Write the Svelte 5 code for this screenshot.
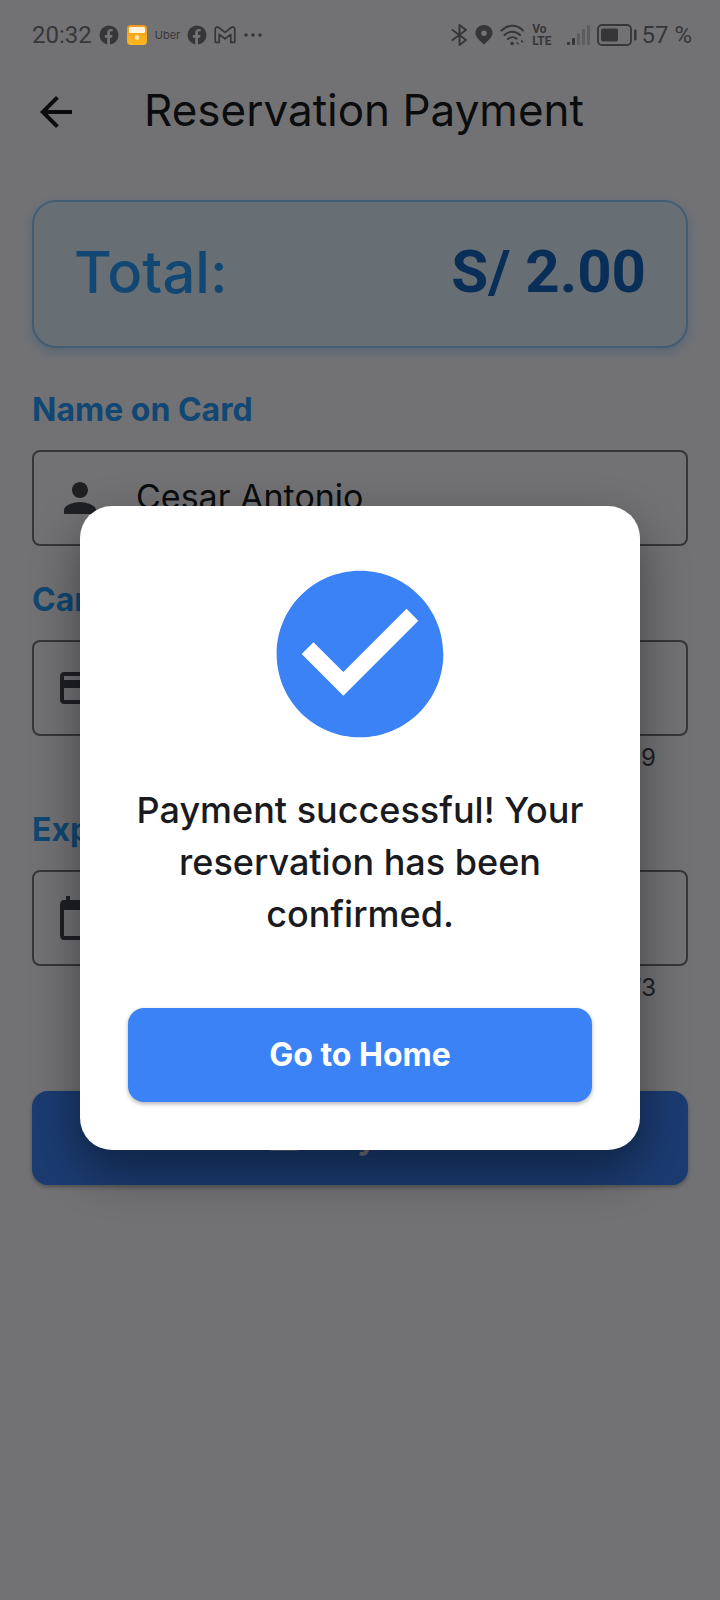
<script>
  let name = $state('Cesar Antonio');
  let cardNumber = $state('4557 8800 1234 5678');
  let expiry = $state('12/28');
  let cvv = $state('123');
  const bars = [3, 7, 12, 16, 20];
</script>

{#snippet facebook()}
  <svg class="glyph" width="20" height="20" viewBox="0 0 20 20" aria-hidden="true">
    <circle cx="10" cy="10" r="9.5" fill="currentColor" />
    <path d="M8.2 20v-7.2H5.8V10h2.4V7.9c0-2.6 1.5-3.9 3.7-3.9.9 0 1.8.1 1.8.1v2.2h-1.1c-1.2 0-1.6.7-1.6 1.5V10h2.6l-.5 2.8H11V20z" fill="#737375" />
  </svg>
{/snippet}

{#snippet card()}
  <path d="M20 4H4c-1.11 0-1.99.89-1.99 2L2 18c0 1.11.89 2 2 2h16c1.11 0 2-.89 2-2V6c0-1.11-.89-2-2-2zm0 14H4v-6h16v6zm0-10H4V6h16v2z" fill="currentColor" />
{/snippet}

<div class="screen">
  <div class="status">
    <div class="group left">
      <span class="clock">20:32</span>
      {@render facebook()}
      <svg class="glyph" width="22" height="22" viewBox="0 0 22 22" aria-hidden="true">
        <defs>
          <linearGradient id="amber" x1="0" y1="0" x2="0" y2="1">
            <stop offset="0" stop-color="#ee9a22" />
            <stop offset="1" stop-color="#ffb81c" />
          </linearGradient>
        </defs>
        <rect x="1" y="1" width="20" height="20" rx="4" fill="url(#amber)" />
        <rect x="3" y="3" width="16" height="6" rx="1.5" fill="#fff3dc" />
        <circle cx="11" cy="13.5" r="2.2" fill="#ffedc0" />
      </svg>
      <span class="uber">Uber</span>
      {@render facebook()}
      <svg class="glyph" width="22" height="18" viewBox="0 0 22 18" fill="none" stroke="currentColor" stroke-width="1.7" stroke-linejoin="round" aria-hidden="true">
        <path d="M1.2 3.2v12.2q0 1 1 1h3V8.400L11 12.800l5.800-4.400v8h3q1 0 1-1V3.200c0-2-2-2.800-3.400-1.700L11 6.400 4.600 1.500C3.200.4 1.200 1.200 1.200 3.200z" />
      </svg>
      <svg class="glyph" width="20" height="20" viewBox="0 0 20 20" fill="currentColor" aria-hidden="true">
        <circle cx="3" cy="10" r="1.800" /><circle cx="10" cy="10" r="1.800" /><circle cx="17" cy="10" r="1.800" />
      </svg>
    </div>
    <div class="group right">
      <svg class="glyph" width="17" height="24" viewBox="0 0 17 24" fill="none" stroke="currentColor" stroke-width="2" stroke-linejoin="round" stroke-linecap="round" aria-hidden="true">
        <path d="M1.500 7l13.500 10L8.500 22V2L15 7 1.500 17" />
      </svg>
      <svg class="glyph" width="18" height="22" viewBox="0 0 18 22" aria-hidden="true">
        <path d="M9 1C4.500 1 .5 4.500.5 9c0 4 3.500 7 8.500 11.500C14 16 17.500 13 17.500 9 17.500 4.500 13.500 1 9 1zm0 5.400a2.800 2.800 0 110 5.600 2.800 2.800 0 010-5.600z" fill="currentColor" />
      </svg>
      <svg class="glyph" width="25" height="22" viewBox="0 0 25 22" fill="none" stroke="currentColor" stroke-width="2" stroke-linecap="round" aria-hidden="true">
        <path d="M1.500 6.500C7.500.3 17 .3 23 6.500M4.500 11C9 6.700 15.500 6.700 20 11M8 15c2.500-2.300 6-2.300 8.500-.2" />
        <circle cx="12" cy="19.500" r="1.800" fill="currentColor" stroke="none" />
        <path d="M18.600 15v6l-3-2.600h3zM21 21.500v-6l3.200 2.700H21z" fill="currentColor" stroke="none" />
      </svg>
      <span class="volte"><span>Vo</span><span>LTE</span></span>
      <svg class="glyph signal" width="24" height="22" viewBox="0 0 24 22" aria-hidden="true">
        {#each bars as h, i}
          <rect x={1 + i * 5} y={21 - h} width="3" height={h} rx="1" fill="currentColor" opacity={i < 2 ? 1 : 0.35} />
        {/each}
      </svg>
      <svg class="glyph" width="41" height="22" viewBox="0 0 41 22" aria-hidden="true">
        <rect x="1" y="1" width="33" height="20" rx="4" fill="none" stroke="currentColor" stroke-width="1.800" />
        <rect x="4" y="4.500" width="17" height="13" rx="2" fill="currentColor" />
        <rect x="37" y="5.500" width="2.500" height="11" rx="1" fill="currentColor" />
      </svg>
      <span class="clock">57 %</span>
    </div>
  </div>

  <header>
    <button class="back" aria-label="Back">
      <svg width="48" height="48" viewBox="0 0 24 24" aria-hidden="true">
        <path d="M20 11H7.830l5.590-5.590L12 4l-8 8 8 8 1.410-1.410L7.830 13H20v-2z" fill="currentColor" />
      </svg>
    </button>
    <h1>Reservation Payment</h1>
  </header>

  <main>
    <section class="total">
      <span class="caption">Total:</span>
      <strong>S/ 2.00</strong>
    </section>

    <div class="item">
      <label for="holder">Name on Card</label>
      <div class="field">
        <svg width="48" height="48" viewBox="0 0 24 24" aria-hidden="true">
          <path d="M12 12c2.210 0 4-1.790 4-4s-1.790-4-4-4-4 1.790-4 4 1.790 4 4 4zm0 2c-2.670 0-8 1.340-8 4v2h16v-2c0-2.660-5.330-4-8-4z" fill="currentColor" />
        </svg>
        <input id="holder" bind:value={name} />
      </div>
    </div>

    <div class="item">
      <label for="number">Card Number</label>
      <div class="field">
        <svg width="48" height="48" viewBox="0 0 24 24" aria-hidden="true">{@render card()}</svg>
        <input id="number" maxlength="19" bind:value={cardNumber} />
      </div>
      <span class="counter">{cardNumber.length}/19</span>
    </div>

    <div class="pair">
      <div class="item">
        <label for="expiry">Expiry</label>
        <div class="field">
          <svg width="48" height="48" viewBox="0 0 24 24" aria-hidden="true">
            <path d="M20 3h-1V1h-2v2H7V1H5v2H4c-1.100 0-2 .9-2 2v16c0 1.100.9 2 2 2h16c1.100 0 2-.9 2-2V5c0-1.100-.9-2-2-2zm0 18H4V8h16v13z" fill="currentColor" />
          </svg>
          <input id="expiry" maxlength="5" bind:value={expiry} />
        </div>
        <span class="counter">{expiry.length}/5</span>
      </div>
      <div class="item">
        <label for="cvv">CVV</label>
        <div class="field">
          <input id="cvv" maxlength="3" bind:value={cvv} />
        </div>
        <span class="counter">{cvv.length}/3</span>
      </div>
    </div>

    <button class="primary pay">
      <svg width="38" height="38" viewBox="0 0 24 24" aria-hidden="true">{@render card()}</svg>
      Pay Now
    </button>
  </main>

  <div class="scrim">
    <div class="dialog" role="dialog" aria-modal="true" aria-labelledby="message">
      <svg class="check" width="200" height="200" viewBox="0 0 24 24" aria-hidden="true">
        <path d="M12 2C6.480 2 2 6.480 2 12s4.480 10 10 10 10-4.480 10-10S17.520 2 12 2zm-2 15l-5-5 1.410-1.410L10 14.170l7.590-7.590L19 8l-9 9z" fill="#3b82f6" />
      </svg>
      <p id="message">Payment successful! Your reservation has been confirmed.</p>
      <button class="primary">Go to Home</button>
    </div>
  </div>
</div>

<style>
  :global(body) {
    background: #f9f9ff;
  }
  .screen {
    position: relative;
    min-height: 100vh;
    background: #f9f9ff;
    color: #1a1b20;
    font-family: Inter, 'Open Sans', sans-serif;
  }
  svg {
    display: block;
    flex: none;
  }
  button {
    border: 0;
    font-family: inherit;
    cursor: pointer;
  }
  .status {
    position: relative;
    z-index: 2;
    box-sizing: border-box;
    height: 56px;
    padding: 14px 28px 0 32px;
    display: flex;
    align-items: center;
    justify-content: space-between;
    color: #363638;
  }
  .group {
    display: flex;
    align-items: center;
    gap: 7px;
  }
  .clock {
    font-family: Roboto, sans-serif;
    font-size: 24px;
    line-height: 28px;
    white-space: nowrap;
  }
  .right .clock {
    margin-left: -4px;
  }
  .uber {
    font-size: 11px;
    line-height: 16px;
  }
  .volte {
    display: flex;
    flex-direction: column;
    font-family: Roboto, sans-serif;
    font-size: 12px;
    line-height: 12px;
    font-weight: 700;
  }
  .signal {
    margin-left: 8px;
  }
  header {
    height: 112px;
    padding: 0 32px;
    display: flex;
    align-items: center;
    gap: 64px;
  }
  .back {
    padding: 0;
    background: none;
    color: #1a1b20;
  }
  h1 {
    margin: 0;
    font-size: 44px;
    line-height: 56px;
    font-weight: 400;
    white-space: nowrap;
    padding-bottom: 4px;
  }
  main {
    padding: 32px;
    display: flex;
    flex-direction: column;
  }
  .total {
    box-sizing: border-box;
    height: 148px;
    margin-bottom: 8px;
    padding: 0 40px 4px;
    display: flex;
    align-items: center;
    justify-content: space-between;
    border: 2px solid #90caf9;
    border-radius: 24px;
    background: #e3f2fd;
    box-shadow: 0 4px 12px rgba(33, 150, 243, 0.3);
    font-size: 58px;
    line-height: 72px;
    color: #279cf8;
  }
  .caption {
    font-weight: 500;
  }
  .total strong {
    font-family: Roboto, sans-serif;
    font-size: 60px;
    font-weight: 700;
    color: #1565c0;
  }
  .item {
    flex: 1;
    min-width: 0;
    padding-top: 34px;
    display: flex;
    flex-direction: column;
  }
  label {
    margin-bottom: 20px;
    font-size: 32px;
    line-height: 40px;
    font-weight: 700;
    color: #279cf8;
  }
  .field {
    box-sizing: border-box;
    height: 96px;
    padding: 0 22px;
    display: flex;
    align-items: center;
    gap: 32px;
    border: 2px solid #74757e;
    border-radius: 8px;
    color: #44464f;
  }
  .field input {
    flex: 1;
    min-width: 0;
    height: 48px;
    padding: 0 0 4px;
    border: 0;
    outline: 0;
    background: none;
    font-family: inherit;
    font-size: 34px;
    color: #1a1b20;
  }
  .counter {
    margin: 8px 32px 4px;
    font-size: 24px;
    line-height: 28px;
    text-align: right;
    color: #44464f;
  }
  .pair {
    display: flex;
    gap: 32px;
  }
  .primary {
    height: 94px;
    width: 100%;
    display: flex;
    align-items: center;
    justify-content: center;
    gap: 16px;
    border-radius: 16px;
    background: #3b82f6;
    box-shadow: 0 2px 4px rgba(0, 0, 0, 0.3);
    font-size: 32px;
    line-height: 40px;
    font-weight: 700;
    color: #fff;
  }
  .pay {
    margin-top: 85px;
  }
  .scrim {
    position: absolute;
    inset: 0;
    z-index: 1;
    box-sizing: border-box;
    padding: 56px 80px 0;
    display: flex;
    align-items: center;
    justify-content: center;
    background: rgba(0, 0, 0, 0.54);
  }
  .dialog {
    box-sizing: border-box;
    width: 100%;
    max-width: 560px;
    padding: 48px;
    display: flex;
    flex-direction: column;
    align-items: center;
    border-radius: 32px;
    background: #fff;
    box-shadow: 0 20px 48px rgba(0, 0, 0, 0.42);
  }
  p {
    margin: 30px 0 68px;
    font-size: 36px;
    line-height: 52px;
    font-weight: 500;
    text-align: center;
    color: #1a1b20;
  }
</style>
